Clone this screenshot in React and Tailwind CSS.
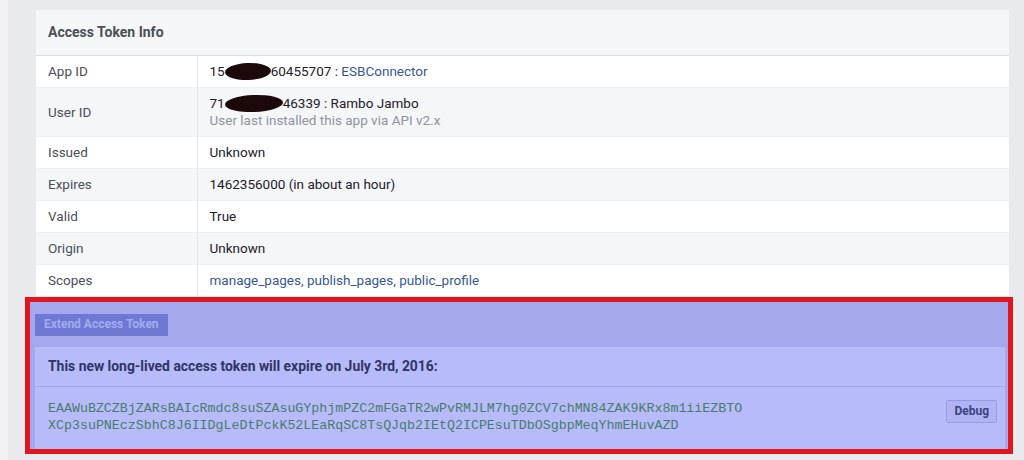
import React from "react";

const rows = [
  { label: "App ID", kind: "app" },
  { label: "User ID", kind: "user" },
  { label: "Issued", value: "Unknown" },
  { label: "Expires", value: "1462356000 (in about an hour)" },
  { label: "Valid", value: "True" },
  { label: "Origin", value: "Unknown" },
  { label: "Scopes", kind: "scopes" },
];

const Blob = ({ w }) => (
  <span
    className={`inline-block h-[17px] ${w} rounded-[50%] bg-[#1c0a0b] align-[-4px] -rotate-2`}
  />
);

const Value = ({ row }) => {
  if (row.kind === "app") {
    return (
      <div>
        15
        <Blob w="w-[46px]" />
        60455707 : <span className="text-[#365899]">ESBConnector</span>
      </div>
    );
  }
  if (row.kind === "user") {
    return (
      <div>
        <div>
          71
          <Blob w="w-[58px]" />
          46339 : Rambo Jambo
        </div>
        <div className="text-[#90949c]">User last installed this app via API v2.x</div>
      </div>
    );
  }
  if (row.kind === "scopes") {
    return (
      <div className="text-[#365899]">
        manage_pages, publish_pages, public_profile
      </div>
    );
  }
  return <div>{row.value}</div>;
};

const App = () => {
  return (
    <div
      className="w-[1024px] h-[460px] bg-[#e9eaed] flex overflow-hidden text-[13.5px] leading-[17px]"
      style={{ fontFamily: "Roboto, 'Liberation Sans', Arial, sans-serif" }}
    >
      <div className="w-[8px] bg-[#f2f2f4]" />
      <div className="flex-1 pt-[10px] pl-[17px]">
        {/* card */}
        <div className="ml-[11px] w-[973px] bg-white border-b border-[#e5e6ea]">
          <div className="h-[46px] flex items-center px-[12px] bg-[#f5f6f8] border-b border-[#dddfe2] font-bold text-[14px] text-[#4b4f56]">
            Access Token Info
          </div>
          <table className="w-full border-collapse">
            <tbody>
              {rows.map((row, index) => (
                <tr
                  key={index}
                  className="odd:bg-white even:bg-[#f5f6f8] border-t border-[#eef0f3] first:border-t-0"
                >
                  <td className="w-[161px] pl-[12px] pt-[7px] pb-[7px] text-[#4b4f56] align-middle border-r border-[#e5e6ea]">
                    {row.label}
                  </td>
                  <td className="pl-[12px] pt-[7px] pb-[7px] text-[#1d2129] align-top">
                    <Value row={row} />
                  </td>
                </tr>
              ))}
            </tbody>
          </table>
        </div>

        {/* highlighted part */}
        <div className="w-[988px] border-[5px] border-[#e0161f] bg-[#a5a8ec]">
          <div className="h-[45px] flex items-center pl-[5px]">
            <div className="h-[22px] flex items-center px-[9px] bg-[#6e79d3] text-[#a4abf1] text-[12px] font-bold">
              Extend Access Token
            </div>
          </div>
          <div className="ml-[5px] mr-[3px] bg-[#b8bbfa]">
            <div className="h-[40px] flex items-center px-[13px] font-bold text-[13.9px] text-[#2f3566] border-b border-[#9fa3e4]">
              This new long-lived access token will expire on July 3rd, 2016:
            </div>
            <div className="flex items-start justify-between pl-[13px] pr-[8px] pt-[13px] pb-[15px]">
              <div
                className="text-[13.3px] leading-[17px] text-[#477d6c]"
                style={{ fontFamily: "'Liberation Mono', 'DejaVu Sans Mono', monospace" }}
              >
                <div>EAAWuBZCZBjZARsBAIcRmdc8suSZAsuGYphjmPZC2mFGaTR2wPvRMJLM7hg0ZCV7chMN84ZAK9KRx8m1iiEZBTO</div>
                <div>XCp3suPNEczSbhC8J6IIDgLeDtPckK52LEaRqSC8TsQJqb2IEtQ2ICPEsuTDbOSgbpMeqYhmEHuvAZD</div>
              </div>
              <div className="h-[23px] px-[7px] flex items-center bg-[#b1b4f4] border border-[#989cdc] rounded-[2px] text-[12px] font-bold text-[#3b4382]">
                Debug
              </div>
            </div>
          </div>
        </div>
      </div>
    </div>
  );
};

export default App;
